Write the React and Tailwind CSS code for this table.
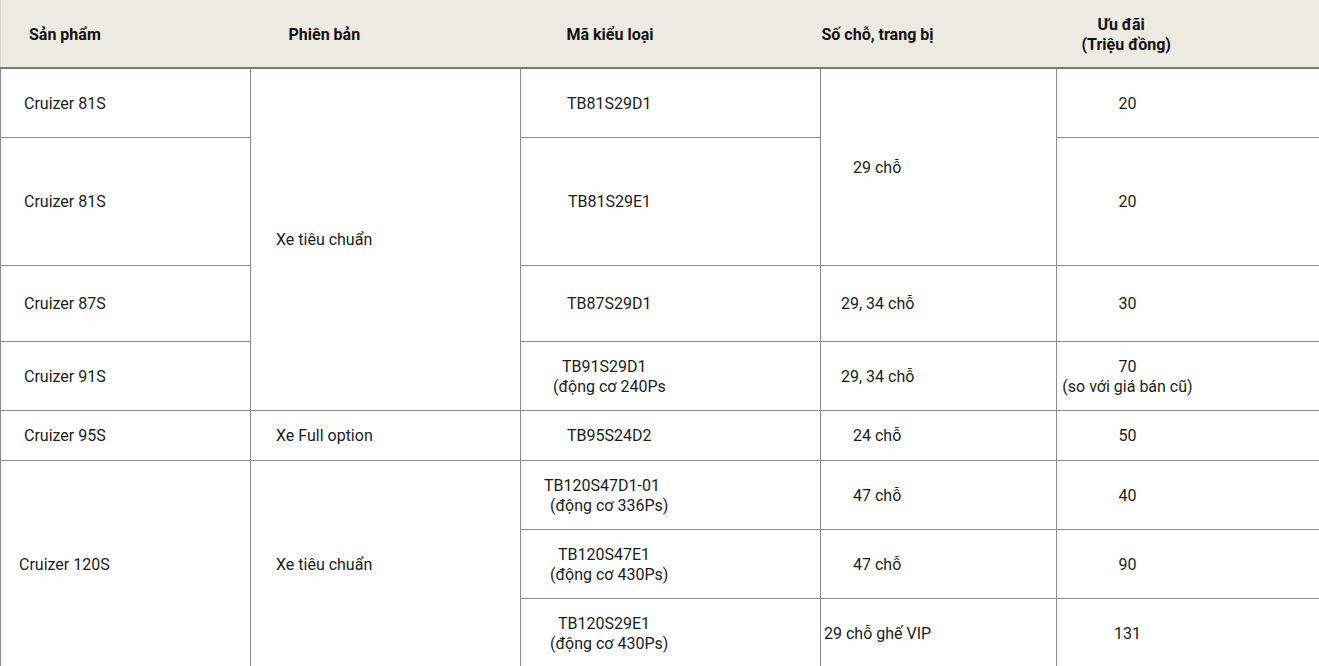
import React from "react";

const B = "border border-[#8c8c8c] p-0 pt-[2px]";

function L({ pl, children }) {
  return <div style={{ paddingLeft: pl }}>{children}</div>;
}

export default function App() {
  return (
    <div className="w-[1319px] h-[666px] overflow-hidden bg-white font-['Roboto','Liberation_Sans',sans-serif] text-[16px] leading-5 text-[#1c1c1c]">
      <table className="border-collapse table-fixed w-[1330px]">
        <colgroup>
          <col className="w-[250px]" />
          <col className="w-[270px]" />
          <col className="w-[300px]" />
          <col className="w-[236px]" />
          <col className="w-[274px]" />
        </colgroup>
        <thead>
          <tr className="h-[68px] bg-[#edeae1] font-bold text-[#111]">
            <th className="p-0 pt-[2px] text-left font-bold border-b-2 border-b-[#7a7a7a] border-l border-l-[#d8d6cf]"><L pl={28}>Sản phẩm</L></th>
            <th className="p-0 pt-[2px] text-left font-bold border-b-2 border-b-[#7a7a7a]"><L pl={38}>Phiên bản</L></th>
            <th className="p-0 pt-[2px] text-left font-bold border-b-2 border-b-[#7a7a7a]"><L pl={46}>Mã kiểu loại</L></th>
            <th className="p-0 pt-[2px] text-left font-bold border-b-2 border-b-[#7a7a7a]"><L pl={1}>Số chỗ, trang bị</L></th>
            <th className="p-0 pt-[2px] text-left font-bold border-b-2 border-b-[#7a7a7a]">
              <L pl={41}>Ưu đãi</L>
              <L pl={25}>(Triệu đồng)</L>
            </th>
          </tr>
        </thead>
        <tbody>
          <tr className="h-[69px]">
            <td className={B}><L pl={23}>Cruizer 81S</L></td>
            <td className={B} rowSpan={4}><L pl={25}>Xe tiêu chuẩn</L></td>
            <td className={B}><L pl={46}>TB81S29D1</L></td>
            <td className={B} rowSpan={2}><L pl={32}>29 chỗ</L></td>
            <td className={`${B} text-center`}><div className="pr-[132px]">20</div></td>
          </tr>
          <tr className="h-[128px]">
            <td className={B}><L pl={23}>Cruizer 81S</L></td>
            <td className={B}><L pl={47}>TB81S29E1</L></td>
            <td className={`${B} text-center`}><div className="pr-[132px]">20</div></td>
          </tr>
          <tr className="h-[76px]">
            <td className={B}><L pl={23}>Cruizer 87S</L></td>
            <td className={B}><L pl={46}>TB87S29D1</L></td>
            <td className={B}><L pl={20}>29, 34 chỗ</L></td>
            <td className={`${B} text-center`}><div className="pr-[132px]">30</div></td>
          </tr>
          <tr className="h-[69px]">
            <td className={B}><L pl={23}>Cruizer 91S</L></td>
            <td className={B}>
              <L pl={41}>TB91S29D1</L>
              <L pl={32}>(động cơ 240Ps</L>
            </td>
            <td className={B}><L pl={20}>29, 34 chỗ</L></td>
            <td className={`${B} text-center`}>
              <div className="pr-[132px]">70</div>
              <div className="pr-[132px]">(so với giá bán cũ)</div>
            </td>
          </tr>
          <tr className="h-[50px]">
            <td className={B}><L pl={23}>Cruizer 95S</L></td>
            <td className={B}><L pl={25}>Xe Full option</L></td>
            <td className={B}><L pl={46}>TB95S24D2</L></td>
            <td className={B}><L pl={32}>24 chỗ</L></td>
            <td className={`${B} text-center`}><div className="pr-[132px]">50</div></td>
          </tr>
          <tr className="h-[69px]">
            <td className={B} rowSpan={3}><L pl={18}>Cruizer 120S</L></td>
            <td className={B} rowSpan={3}><L pl={25}>Xe tiêu chuẩn</L></td>
            <td className={B}>
              <L pl={23}>TB120S47D1-01</L>
              <L pl={29}>(động cơ 336Ps)</L>
            </td>
            <td className={B}><L pl={32}>47 chỗ</L></td>
            <td className={`${B} text-center`}><div className="pr-[132px]">40</div></td>
          </tr>
          <tr className="h-[69px]">
            <td className={B}>
              <L pl={37}>TB120S47E1</L>
              <L pl={29}>(động cơ 430Ps)</L>
            </td>
            <td className={B}><L pl={32}>47 chỗ</L></td>
            <td className={`${B} text-center`}><div className="pr-[132px]">90</div></td>
          </tr>
          <tr className="h-[69px]">
            <td className={B}>
              <L pl={37}>TB120S29E1</L>
              <L pl={29}>(động cơ 430Ps)</L>
            </td>
            <td className={B}><L pl={3}>29 chỗ ghế VIP</L></td>
            <td className={`${B} text-center`}><div className="pr-[132px]">131</div></td>
          </tr>
        </tbody>
      </table>
    </div>
  );
}
